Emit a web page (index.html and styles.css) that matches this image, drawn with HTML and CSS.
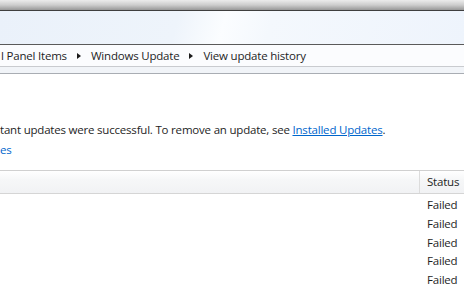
FILE: index.html
```html
<!DOCTYPE html>
<html>
<head>
<meta charset="utf-8">
<link rel="stylesheet" href="styles.css">
</head>
<body>
<div class="window">
  <div class="titlebar"></div>
  <div class="toolbar"></div>
  <div class="crumbs">
    <span class="crumb">l Panel Items</span>
    <span class="arrow"></span>
    <span class="crumb">Windows Update</span>
    <span class="arrow"></span>
    <span class="crumb">View update history</span>
  </div>
  <div class="band"></div>
  <div class="content">
    <p class="intro">tant updates were successful. To remove an update, see <a class="link" href="#">Installed Updates</a>.</p>
    <p class="trouble"><a class="link plain" href="#">es</a></p>
  </div>
  <div class="table">
    <div class="thead">
      <div class="col-name"></div>
      <div class="col-status">Status</div>
    </div>
    <div class="rows">
      <div class="row"><div class="col-name"></div><div class="col-status">Failed</div></div>
      <div class="row"><div class="col-name"></div><div class="col-status">Failed</div></div>
      <div class="row"><div class="col-name"></div><div class="col-status">Failed</div></div>
      <div class="row"><div class="col-name"></div><div class="col-status">Failed</div></div>
      <div class="row"><div class="col-name"></div><div class="col-status">Failed</div></div>
    </div>
  </div>
</div>
</body>
</html>
```

FILE: styles.css
```css
html, body {
  margin: 0;
  padding: 0;
  width: 464px;
  height: 290px;
  overflow: hidden;
  background: #ffffff;
}
.window {
  font-family: "Open Sans", "Noto Sans", sans-serif;
  font-size: 11.5px;
  letter-spacing: -0.2px;
  color: #1e1e1e;
}
.titlebar {
  height: 10px;
  background: linear-gradient(to bottom, #ececec 0%, #cdcdcd 50%, #989898 100%);
  border-bottom: 1px solid #3f3f3f;
}
.toolbar {
  height: 33px;
  background: linear-gradient(105deg, #eaf1fa 0%, #eef4fb 38%, #fbfdff 48%, #f4f8fd 58%, #eef4fc 100%);
  border-bottom: 1px solid #5a5a5a;
}
.crumbs {
  height: 21px;
  display: flex;
  align-items: center;
  gap: 8px;
  padding-left: 1px;
  background: #fbfcfe;
  border-bottom: 1px solid #c9cbcf;
  white-space: nowrap;
}
.crumb {
  line-height: 21px;
}
.arrow {
  width: 0;
  height: 0;
  border-top: 3.5px solid transparent;
  border-bottom: 3.5px solid transparent;
  border-left: 4px solid #1a1a1a;
  margin: 0 2px;
}
.band {
  height: 6px;
  background: #f1f4f8;
  border-bottom: 1px solid #a9adb3;
}
.content {
  height: 96px;
  padding-top: 46px;
  box-sizing: border-box;
}
.content p {
  margin: 0;
  white-space: nowrap;
  line-height: 20px;
}
.link {
  color: #0066cc;
}
.plain {
  text-decoration: none;
}
.table {
  border-top: 1px solid #d0d0d0;
}
.thead {
  display: flex;
  height: 22px;
  background: linear-gradient(to bottom, #ffffff 0%, #f6f7f8 40%, #f1f2f4 100%);
  border-bottom: 1px solid #d5d5d5;
}
.col-name {
  width: 419px;
}
.col-status {
  padding-left: 7px;
  line-height: 22px;
}
.thead .col-name {
  border-right: 1px solid #dcdcdc;
}
.rows {
  padding-top: 2px;
}
.row {
  display: flex;
  height: 18.75px;
}
.row .col-status {
  line-height: 18.75px;
  padding-left: 8px;
}
```
